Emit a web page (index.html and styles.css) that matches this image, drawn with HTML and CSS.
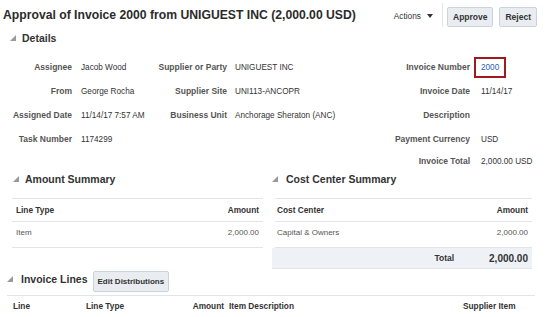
FILE: index.html
```html
<!DOCTYPE html>
<html lang="en">
<head>
    <meta charset="UTF-8">
    <title>Approval of Invoice 2000</title>
    <link rel="stylesheet" href="styles.css">
</head>
<body>
    <div class="topbar">
        <h1 class="title">Approval of Invoice 2000 from UNIGUEST INC (2,000.00 USD)</h1>
        <div class="actions">Actions
            <svg class="caret" width="6" height="4" viewBox="0 0 6 4"><polygon points="0,0 6,0 3,4" fill="#333"/></svg>
        </div>
        <div class="sep"></div>
        <button class="btn">Approve</button>
        <button class="btn">Reject</button>
    </div>

    <div class="section-head details-head">
        <svg class="tri" width="6" height="6" viewBox="0 0 6 6"><polygon points="6,0 6,6 0,6" fill="#999"/></svg>
        <span>Details</span>
    </div>

    <div class="details">
        <div class="lbl">Assignee</div>
        <div class="val">Jacob Wood</div>
        <div class="lbl">Supplier or Party</div>
        <div class="val c2">UNIGUEST INC</div>
        <div class="lbl">Invoice Number</div>
        <div class="val c3"><span class="inv-box">2000</span></div>

        <div class="lbl">From</div>
        <div class="val">George Rocha</div>
        <div class="lbl">Supplier Site</div>
        <div class="val c2">UNI113-ANCOPR</div>
        <div class="lbl">Invoice Date</div>
        <div class="val c3">11/14/17</div>

        <div class="lbl">Assigned Date</div>
        <div class="val">11/14/17 7:57 AM</div>
        <div class="lbl">Business Unit</div>
        <div class="val c2">Anchorage Sheraton (ANC)</div>
        <div class="lbl">Description</div>
        <div class="val c3"></div>

        <div class="lbl">Task Number</div>
        <div class="val">1174299</div>
        <div class="lbl"></div>
        <div class="val c2"></div>
        <div class="lbl">Payment Currency</div>
        <div class="val c3">USD</div>

        <div class="lbl"></div>
        <div class="val"></div>
        <div class="lbl"></div>
        <div class="val c2"></div>
        <div class="lbl">Invoice Total</div>
        <div class="val c3 total-val">2,000.00 USD</div>
    </div>

    <div class="summaries">
        <div class="summary amount-summary">
            <div class="section-head">
                <svg class="tri" width="6" height="6" viewBox="0 0 6 6"><polygon points="6,0 6,6 0,6" fill="#999"/></svg>
                <span>Amount Summary</span>
            </div>
            <div class="tbl">
                <div class="tr th"><span>Line Type</span><span>Amount</span></div>
                <div class="tr td"><span>Item</span><span>2,000.00</span></div>
            </div>
        </div>
        <div class="summary cost-summary">
            <div class="section-head">
                <svg class="tri" width="6" height="6" viewBox="0 0 6 6"><polygon points="6,0 6,6 0,6" fill="#999"/></svg>
                <span>Cost Center Summary</span>
            </div>
            <div class="tbl">
                <div class="tr th"><span>Cost Center</span><span>Amount</span></div>
                <div class="tr td"><span>Capital &amp; Owners</span><span>2,000.00</span></div>
                <div class="tr total-row"><span class="total-lbl">Total</span><span class="total-amt">2,000.00</span></div>
            </div>
        </div>
    </div>

    <div class="section-head lines-head">
        <svg class="tri" width="6" height="6" viewBox="0 0 6 6"><polygon points="6,0 6,6 0,6" fill="#999"/></svg>
        <span class="lines-title">Invoice Lines</span>
        <button class="btn small-btn">Edit Distributions</button>
    </div>

    <div class="lines">
        <div class="lines-header">
            <span>Line</span>
            <span>Line Type</span>
            <span class="num">Amount</span>
            <span class="desc">Item Description</span>
            <span>Supplier Item</span>
        </div>
    </div>
</body>
</html>
```

FILE: styles.css
```css
body {
    margin: 0;
    font-family: "Liberation Sans", Arial, sans-serif;
    color: #333;
    background-color: #fff;
    overflow: hidden;
}

.topbar {
    display: flex;
    align-items: center;
    height: 30px;
    padding: 0 13px 0 3px;
}

.title {
    flex: 1;
    margin: 0;
    font-size: 12.2px;
    font-weight: bold;
    color: #2b2b2b;
}

.actions {
    display: flex;
    align-items: center;
    gap: 6px;
    font-size: 8.3px;
    color: #333;
    margin-top: 2px;
}

.sep {
    width: 1px;
    height: 24px;
    background-color: #e3e6ea;
    margin: 0 4px 0 9px;
}

.btn {
    height: 20px;
    padding: 0 5px;
    font-family: "Liberation Sans", Arial, sans-serif;
    font-size: 8.5px;
    font-weight: bold;
    color: #333;
    background-color: #e9ecf0;
    border: 1px solid #cdd3da;
    border-radius: 2px;
    margin-top: 3px;
}

.btn + .btn {
    margin-left: 6px;
}

.section-head {
    display: flex;
    align-items: center;
    gap: 6px;
    height: 16px;
    font-size: 10.5px;
    font-weight: bold;
    color: #333;
}

.details-head {
    padding-left: 10px;
}

/* grid of label / value pairs */
.details {
    display: grid;
    grid-template-columns: 72px 78px 77px 143px 100px 1fr;
    grid-template-rows: repeat(4, 24px) 20px;
    align-items: center;
    margin-top: 9px;
}

.lbl {
    text-align: right;
    font-size: 8.5px;
    font-weight: bold;
    color: #555;
}

.val {
    padding-left: 9px;
    font-size: 8.2px;
    color: #333;
}

.val.c2 {
    padding-left: 8px;
}

.val.c3 {
    padding-left: 11px;
}

.inv-box {
    display: inline-block;
    margin-left: -7px;
    padding: 4px 5px;
    border: 2px solid #a0191f;
    color: #2a62b4;
}

.summaries {
    display: flex;
    gap: 12px;
    padding-left: 12px;
}

.amount-summary {
    width: 251px;
}

.amount-summary .section-head {
    padding-left: 1px;
}

.cost-summary {
    width: 257px;
}

.cost-summary .section-head {
    margin-left: -3px;
    gap: 8px;
}

.tbl {
    margin-top: 11px;
}

.tr {
    display: flex;
    justify-content: space-between;
    align-items: center;
    border-top: 1px solid #e1e4e8;
    padding: 0 4px;
}

.cost-summary .tr {
    padding-left: 2px;
}

.th {
    height: 22px;
    font-size: 8.3px;
    font-weight: bold;
    color: #333;
}

.td {
    height: 21px;
    padding-bottom: 4px;
    font-size: 8px;
    color: #555;
    border-bottom: 1px solid #e1e4e8;
}

.total-row {
    justify-content: flex-end;
    gap: 35px;
    height: 20px;
    margin-left: -3px;
    border-top: none;
    border-bottom: 1px solid #e1e4e8;
    background-color: #eef1f5;
    font-weight: bold;
    color: #333;
}

.total-lbl {
    font-size: 8.5px;
}

.total-amt {
    font-size: 10px;
}

.lines-head {
    height: 22px;
    padding-left: 7px;
    gap: 8px;
    margin-top: 1px;
}

.lines-head .tri,
.lines-title {
    margin-bottom: 4px;
}

.small-btn {
    height: 21px;
    margin: 0 0 0 -3px;
    padding: 0 4px;
    font-size: 8px;
}

.lines {
    margin: 3px 15px 0 7px;
    border-top: 1px solid #e1e4e8;
}

.lines-header {
    display: grid;
    grid-template-columns: 73px 80px 58px 239px 1fr;
    align-items: center;
    height: 20px;
    padding-left: 6px;
    font-size: 8.3px;
    font-weight: bold;
    color: #333;
}

.lines-header .num {
    text-align: right;
}

.lines-header .desc {
    padding-left: 5px;
}
```
